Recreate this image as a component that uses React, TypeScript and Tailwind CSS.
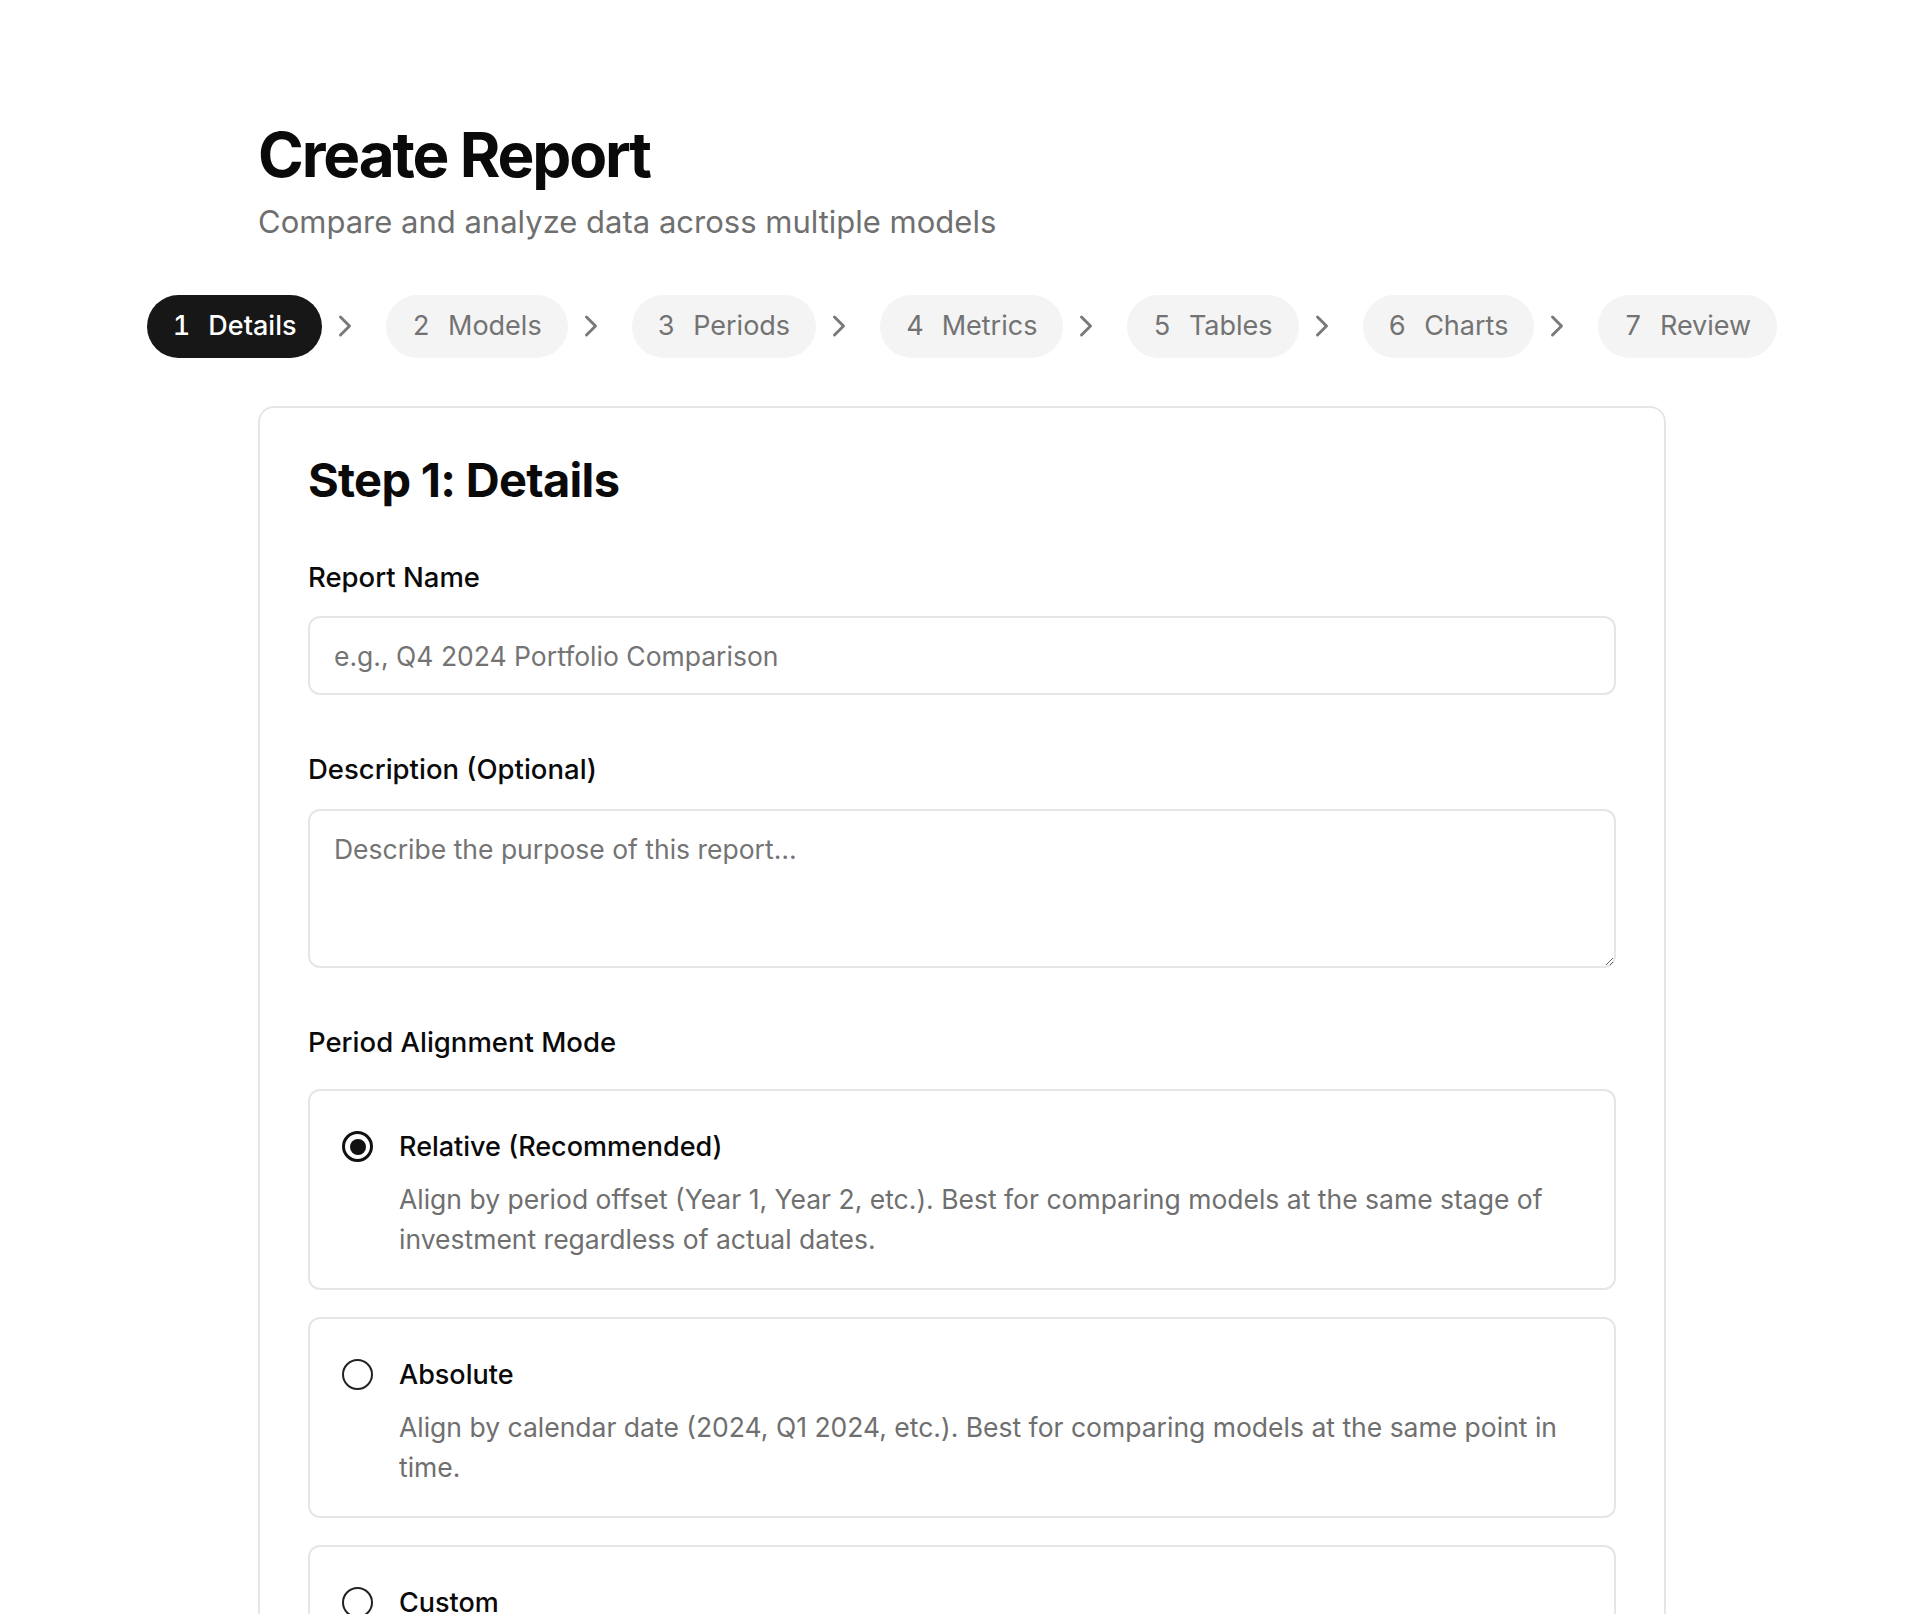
import { useState } from "react";
import { ChevronRight } from "lucide-react";

// Wizard steps shown in the progress bar
const steps = ["Details", "Models", "Periods", "Metrics", "Tables", "Charts", "Review"];

type AlignmentMode = "relative" | "absolute" | "custom";

const alignmentModes: { id: AlignmentMode; title: string; description: string }[] = [
  {
    id: "relative",
    title: "Relative (Recommended)",
    description:
      "Align by period offset (Year 1, Year 2, etc.). Best for comparing models at the same stage of investment regardless of actual dates.",
  },
  {
    id: "absolute",
    title: "Absolute",
    description:
      "Align by calendar date (2024, Q1 2024, etc.). Best for comparing models at the same point in time.",
  },
  {
    id: "custom",
    title: "Custom",
    description: "Manually map periods from each model onto a shared timeline.",
  },
];

function Stepper({ current }: { current: number }) {
  return (
    <div className="flex justify-center items-center">
      {steps.map((step, i) => {
        const active = i === current;
        return (
          <div key={step} className="flex items-center shrink-0">
            <div
              className={`flex items-center gap-[18px] h-[63px] px-[26px] rounded-full whitespace-nowrap text-[27px] ${
                active ? "bg-[#171717] text-white font-medium" : "bg-[#f4f4f4] text-[#737373]"
              }`}
            >
              <span className="tabular-nums">{i + 1}</span>
              <span>{step}</span>
            </div>
            {i < steps.length - 1 && (
              <ChevronRight size={36} strokeWidth={2} className="ml-[5px] mr-[23px] text-[#7a7a7a]" />
            )}
          </div>
        );
      })}
    </div>
  );
}

function RadioDot({ checked }: { checked: boolean }) {
  return (
    <span
      className={`flex items-center justify-center shrink-0 w-[31px] h-[31px] rounded-full ${
        checked ? "border-[3px] border-[#111]" : "border-2 border-[#222]"
      }`}
    >
      {checked && <span className="w-[16px] h-[16px] rounded-full bg-[#111]" />}
    </span>
  );
}

export default function App() {
  const [reportName, setReportName] = useState("");
  const [description, setDescription] = useState("");
  const [mode, setMode] = useState<AlignmentMode>("relative");

  return (
    <div className="min-h-screen bg-white pl-3 font-['Inter',sans-serif] text-[#0a0a0a]">
      <div className="mx-auto w-[1408px] pt-[124px] pb-24">
        <h1 className="text-[62px] leading-none font-bold tracking-[-0.035em]">Create Report</h1>
        <p className="mt-[13px] text-[31px] leading-[46.5px] text-[#6f6f6f]">
          Compare and analyze data across multiple models
        </p>

        <div className="mt-[49px]">
          <Stepper current={0} />
        </div>

        <div className="mt-[48px] rounded-[16px] border-2 border-[#e6e6e6] p-12">
          <h2 className="text-[47px] leading-none font-bold tracking-[-0.015em]">Step 1: Details</h2>

          <div className="mt-[54px]">
            <label className="block text-[27.5px] leading-[40.5px] font-medium mb-[19px]">Report Name</label>
            <input
              value={reportName}
              onChange={(e) => setReportName(e.target.value)}
              placeholder="e.g., Q4 2024 Portfolio Comparison"
              className="block w-full h-[79px] rounded-[12px] border-2 border-[#e6e6e6] px-[24px] text-[26.5px] outline-none placeholder:text-[#747474]"
            />
          </div>

          <div className="mt-[54px]">
            <label className="block text-[27.5px] leading-[40.5px] font-medium mb-[19px]">
              Description (Optional)
            </label>
            <textarea
              value={description}
              onChange={(e) => setDescription(e.target.value)}
              placeholder="Describe the purpose of this report…"
              className="block w-full h-[159px] rounded-[12px] border-2 border-[#e6e6e6] px-[24px] py-[18px] text-[26.5px] leading-[40.5px] outline-none placeholder:text-[#747474]"
            />
          </div>

          <div className="mt-[54px]">
            <label className="block text-[27.5px] leading-[40.5px] font-medium mb-[27px]">Period Alignment Mode</label>
            <div className="flex flex-col gap-[27px]">
              {alignmentModes.map((m) => (
                <button
                  key={m.id}
                  type="button"
                  onClick={() => setMode(m.id)}
                  className="flex items-start gap-[26px] w-full text-left rounded-[12px] border-2 border-[#e6e6e6] px-[32px] pt-[36px] pb-[29px]"
                >
                  <span className="pt-[4px]">
                    <RadioDot checked={mode === m.id} />
                  </span>
                  <span className="flex flex-col">
                    <span className="text-[27px] leading-[40px] font-medium">{m.title}</span>
                    <span className="mt-[12px] text-[26.5px] leading-[40px] text-[#6f6f6f]">{m.description}</span>
                  </span>
                </button>
              ))}
            </div>
          </div>
        </div>
      </div>
    </div>
  );
}
